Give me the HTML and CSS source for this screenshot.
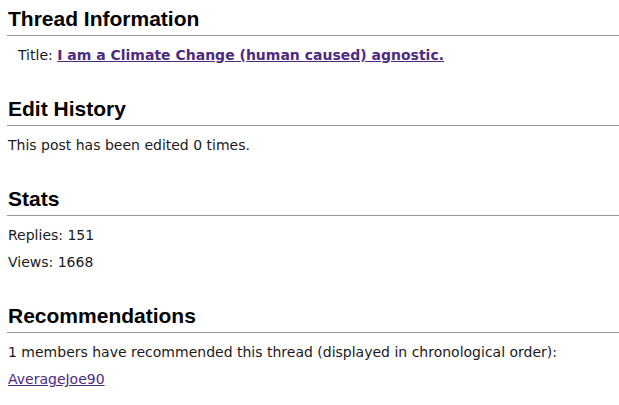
FILE: index.html
```html
<!DOCTYPE html>
<html>
<head>
<meta charset="utf-8">
<title>Thread Information</title>
<link rel="stylesheet" href="styles.css">
</head>
<body>
<div class="page">
  <section class="section">
    <h2 class="heading">Thread Information</h2>
    <p class="line line-indent">Title: <a class="link link-bold" href="#">I am a Climate Change (human caused) agnostic.</a></p>
  </section>
  <section class="section">
    <h2 class="heading">Edit History</h2>
    <p class="line">This post has been edited 0 times.</p>
  </section>
  <section class="section">
    <h2 class="heading">Stats</h2>
    <p class="line">Replies: 151</p>
    <p class="line">Views: 1668</p>
  </section>
  <section class="section">
    <h2 class="heading">Recommendations</h2>
    <p class="line">1 members have recommended this thread (displayed in chronological order):</p>
    <p class="line"><a class="link" href="#">AverageJoe90</a></p>
  </section>
</div>
</body>
</html>
```
FILE: styles.css
```css
html, body {
  margin: 0;
  padding: 0;
  background: #ffffff;
}
.page {
  padding: 7px 0 0 7px;
  color: #111111;
}
.section {
  margin-bottom: 28px;
}
.heading {
  margin: 0;
  font-family: "Liberation Sans", Arial, sans-serif;
  font-weight: bold;
  font-size: 21px;
  line-height: 24px;
  color: #000000;
  padding: 0 0 4px 1px;
  border-bottom: 1px solid #999999;
}
.line {
  margin: 0;
  font-family: "DejaVu Sans", Verdana, sans-serif;
  font-size: 14px;
  line-height: 27px;
  padding-left: 1px;
  color: #1a1a1a;
}
.heading + .line {
  margin-top: 6px;
}
.line-indent {
  padding-left: 11px;
}
.link {
  color: #4e2a7f;
  text-decoration: underline;
}
.link-bold {
  font-weight: bold;
}
```
